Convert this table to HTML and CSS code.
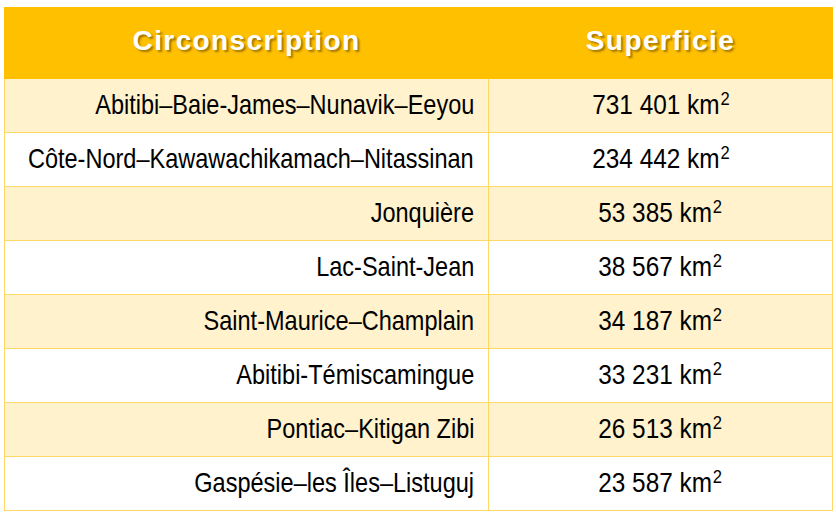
FILE: index.html
```html
<!DOCTYPE html>
<html lang="fr">
<head>
<meta charset="utf-8">
<title>Circonscriptions</title>
<link rel="stylesheet" href="styles.css">
</head>
<body>
<div class="wrap">
<table class="areas">
  <thead>
    <tr><th class="c1">Circonscription</th><th class="c2">Superficie</th></tr>
  </thead>
  <tbody>
    <tr class="alt"><td class="name"><div class="cell"><span class="t">Abitibi–Baie-James–Nunavik–Eeyou</span></div></td><td class="area"><div class="cell"><span class="t">731 401 km<sup>2</sup></span></div></td></tr>
    <tr><td class="name"><div class="cell"><span class="t">Côte-Nord–Kawawachikamach–Nitassinan</span></div></td><td class="area"><div class="cell"><span class="t">234 442 km<sup>2</sup></span></div></td></tr>
    <tr class="alt"><td class="name"><div class="cell"><span class="t">Jonquière</span></div></td><td class="area"><div class="cell"><span class="t">53 385 km<sup>2</sup></span></div></td></tr>
    <tr><td class="name"><div class="cell"><span class="t">Lac-Saint-Jean</span></div></td><td class="area"><div class="cell"><span class="t">38 567 km<sup>2</sup></span></div></td></tr>
    <tr class="alt"><td class="name"><div class="cell"><span class="t">Saint-Maurice–Champlain</span></div></td><td class="area"><div class="cell"><span class="t">34 187 km<sup>2</sup></span></div></td></tr>
    <tr><td class="name"><div class="cell"><span class="t">Abitibi-Témiscamingue</span></div></td><td class="area"><div class="cell"><span class="t">33 231 km<sup>2</sup></span></div></td></tr>
    <tr class="alt"><td class="name"><div class="cell"><span class="t">Pontiac–Kitigan Zibi</span></div></td><td class="area"><div class="cell"><span class="t">26 513 km<sup>2</sup></span></div></td></tr>
    <tr><td class="name"><div class="cell"><span class="t">Gaspésie–les Îles–Listuguj</span></div></td><td class="area"><div class="cell"><span class="t">23 587 km<sup>2</sup></span></div></td></tr>
  </tbody>
</table>
</div>
</body>
</html>
```
FILE: styles.css
```css
html, body {
  margin: 0;
  padding: 0;
  background: #ffffff;
}
.wrap {
  padding: 7px 4px 6px 4px;
}
.areas {
  border-collapse: collapse;
  width: 829px;
  table-layout: fixed;
  font-family: "Liberation Sans", Arial, sans-serif;
  color: #000;
}
.areas th {
  background: #ffc000;
  color: #ffffff;
  font-weight: bold;
  font-size: 28px;
  letter-spacing: 1.4px;
  height: 71px;
  padding: 0 0 5px 0;
  box-sizing: border-box;
  text-align: center;
  text-shadow: 2px 2px 2px rgba(90,60,0,0.55);
  border: 1px solid #ffc000;
  white-space: nowrap;
}
.areas th.c1 { width: 484px; }
.areas td {
  height: 54px;
  padding: 0 14px 2px 14px;
  box-sizing: border-box;
  font-size: 28px;
  border: 1px solid #ffd966;
  background: #ffffff;
  white-space: nowrap;
}
.areas tr.alt td { background: #fff2cc; }
.cell {
  display: flex;
  justify-content: flex-end;
  align-items: center;
}
.area .cell { justify-content: center; }
.areas td.area { padding-left: 0; padding-right: 0; }
.t {
  flex: none;
  display: inline-block;
  transform: scaleX(0.84);
  transform-origin: right center;
}
.area .t {
  transform: scaleX(0.87);
  transform-origin: center center;
}
.areas sup {
  font-size: 0.68em;
  vertical-align: 0.45em;
  line-height: 0;
  margin-left: 1px;
}
```
